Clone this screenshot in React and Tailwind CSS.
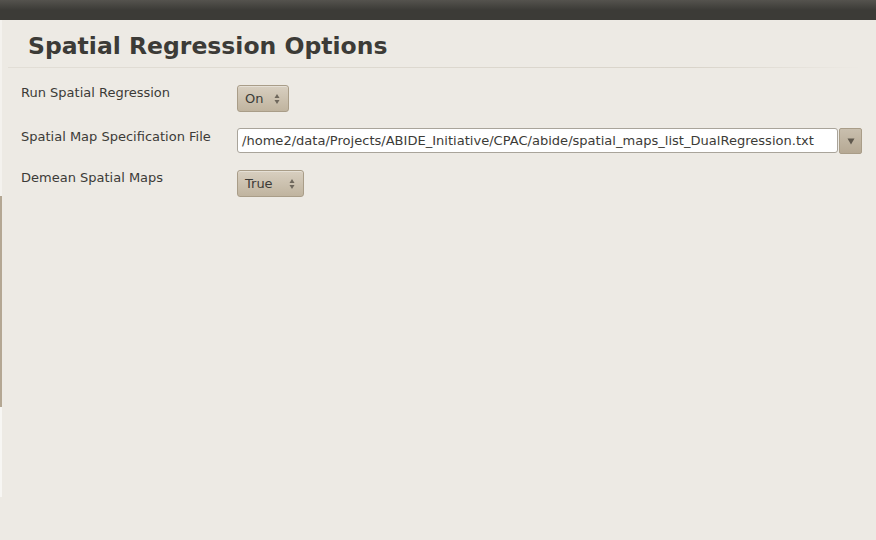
import { useState } from 'react';

const FONT = { fontFamily: '"DejaVu Sans", "Liberation Sans", sans-serif' };

function Arrows() {
  return (
    <svg width="6" height="12" viewBox="0 0 6 12" className="shrink-0">
      <path d="M3 1 L5.5 5 L0.5 5 Z" fill="#6e675c" />
      <path d="M3 11 L5.5 7 L0.5 7 Z" fill="#6e675c" />
    </svg>
  );
}

function Spinner({ value, width }) {
  return (
    <div
      className="h-[27px] flex items-center justify-between pl-[7px] pr-[8px] rounded-[3px] border border-[#a99d88] bg-gradient-to-b from-[#d8cfc0] to-[#c0b49f] shadow-[inset_0_1px_0_rgba(255,255,255,0.35)]"
      style={{ width }}
    >
      <span className="text-[13px] text-[#3c3b37]">{value}</span>
      <Arrows />
    </div>
  );
}

function Row({ label, children }) {
  return (
    <div className="flex items-start">
      <div className="w-[216px] text-[13px] text-[#3c3b37] -mt-[1px]">{label}</div>
      {children}
    </div>
  );
}

export default function App() {
  const [path] = useState('/home2/data/Projects/ABIDE_Initiative/CPAC/abide/spatial_maps_list_DualRegression.txt');

  return (
    <div className="w-[876px] h-[540px] bg-[#edeae4] flex flex-col overflow-hidden" style={FONT}>
      <div className="h-[20px] shrink-0 bg-gradient-to-b from-[#55534e] via-[#3c3b37] to-[#3c3b37]" />
      <div className="flex flex-1">
        <div className="w-[2px] flex flex-col">
          <div className="h-[176px] bg-[#f4f2ee]" />
          <div className="h-[211px] bg-[#b4a793]" />
          <div className="h-[90px] bg-[#f7f6f3]" />
        </div>
        <div className="flex-1 flex flex-col">
          <div className="pl-[26px] pt-[11px] h-[47px]">
            <h1 className="text-[23.5px] font-bold text-[#3c3b37] leading-[30px]">Spatial Regression Options</h1>
          </div>
          <div className="ml-[6px] mr-[14px] h-[1px] bg-gradient-to-r from-[#e2ded6] via-[#d9d4ca] via-80% to-[#edeae4]" />
          <div className="pl-[19px] pt-[17px] flex flex-col">
            <Row label={<span className="block -mt-[1px]">Run Spatial Regression</span>}>
              <Spinner value="On" width={52} />
            </Row>
            <div className="h-[16px]" />
            <Row label={<span className="block">Spatial Map Specification File</span>}>
              <div className="flex items-start">
                <div className="w-[601px] h-[25px] bg-white border border-[#a9a49a] rounded-[3px] flex items-center pl-[4px] pt-[1px] text-[13.05px] text-[#3c3b37] whitespace-nowrap overflow-hidden">
                  {path}
                </div>
                <div className="w-[23px] h-[26px] ml-[1px] rounded-[2px] border border-[#a99d88] bg-gradient-to-b from-[#c9bfae] to-[#b6a994] flex items-center justify-center">
                  <svg width="8" height="7" viewBox="0 0 8 7">
                    <path d="M0.5 0.5 L7.5 0.5 L4 6.5 Z" fill="#5f584d" />
                  </svg>
                </div>
              </div>
            </Row>
            <div className="h-[16px]" />
            <Row label={<span className="block -mt-[1px]">Demean Spatial Maps</span>}>
              <Spinner value="True" width={67} />
            </Row>
          </div>
        </div>
      </div>
    </div>
  );
}
